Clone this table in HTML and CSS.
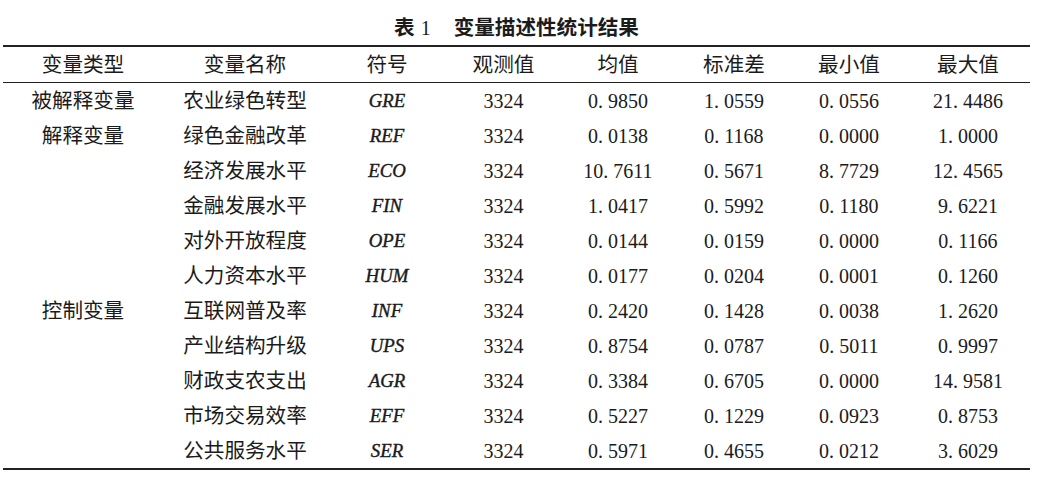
FILE: index.html
```html
<!DOCTYPE html>
<html lang="zh-CN">
<head>
<meta charset="utf-8">
<title>表1 变量描述性统计结果</title>
<link rel="stylesheet" href="styles.css">
</head>
<body>
<div class="caption"><span class="cj">表</span><span class="tno">1</span><span class="cj">变量描述性统计结果</span></div>
<table class="stats">
  <colgroup>
    <col class="c1"><col class="c2"><col class="c3"><col class="c4">
    <col class="c5"><col class="c6"><col class="c7"><col class="c8">
  </colgroup>
  <thead>
    <tr><th>变量类型</th><th>变量名称</th><th>符号</th><th>观测值</th><th>均值</th><th>标准差</th><th>最小值</th><th>最大值</th></tr>
  </thead>
  <tbody>
    <tr><td class="zh">被解释变量</td><td class="zh">农业绿色转型</td><td class="sym">GRE</td><td>3324</td><td>0<span class="pt">.</span>9850</td><td>1<span class="pt">.</span>0559</td><td>0<span class="pt">.</span>0556</td><td>21<span class="pt">.</span>4486</td></tr>
    <tr><td class="zh">解释变量</td><td class="zh">绿色金融改革</td><td class="sym">REF</td><td>3324</td><td>0<span class="pt">.</span>0138</td><td>0<span class="pt">.</span>1168</td><td>0<span class="pt">.</span>0000</td><td>1<span class="pt">.</span>0000</td></tr>
    <tr><td class="zh" rowspan="9">控制变量</td><td class="zh">经济发展水平</td><td class="sym">ECO</td><td>3324</td><td>10<span class="pt">.</span>7611</td><td>0<span class="pt">.</span>5671</td><td>8<span class="pt">.</span>7729</td><td>12<span class="pt">.</span>4565</td></tr>
    <tr><td class="zh">金融发展水平</td><td class="sym">FIN</td><td>3324</td><td>1<span class="pt">.</span>0417</td><td>0<span class="pt">.</span>5992</td><td>0<span class="pt">.</span>1180</td><td>9<span class="pt">.</span>6221</td></tr>
    <tr><td class="zh">对外开放程度</td><td class="sym">OPE</td><td>3324</td><td>0<span class="pt">.</span>0144</td><td>0<span class="pt">.</span>0159</td><td>0<span class="pt">.</span>0000</td><td>0<span class="pt">.</span>1166</td></tr>
    <tr><td class="zh">人力资本水平</td><td class="sym">HUM</td><td>3324</td><td>0<span class="pt">.</span>0177</td><td>0<span class="pt">.</span>0204</td><td>0<span class="pt">.</span>0001</td><td>0<span class="pt">.</span>1260</td></tr>
    <tr><td class="zh">互联网普及率</td><td class="sym">INF</td><td>3324</td><td>0<span class="pt">.</span>2420</td><td>0<span class="pt">.</span>1428</td><td>0<span class="pt">.</span>0038</td><td>1<span class="pt">.</span>2620</td></tr>
    <tr><td class="zh">产业结构升级</td><td class="sym">UPS</td><td>3324</td><td>0<span class="pt">.</span>8754</td><td>0<span class="pt">.</span>0787</td><td>0<span class="pt">.</span>5011</td><td>0<span class="pt">.</span>9997</td></tr>
    <tr><td class="zh">财政支农支出</td><td class="sym">AGR</td><td>3324</td><td>0<span class="pt">.</span>3384</td><td>0<span class="pt">.</span>6705</td><td>0<span class="pt">.</span>0000</td><td>14<span class="pt">.</span>9581</td></tr>
    <tr><td class="zh">市场交易效率</td><td class="sym">EFF</td><td>3324</td><td>0<span class="pt">.</span>5227</td><td>0<span class="pt">.</span>1229</td><td>0<span class="pt">.</span>0923</td><td>0<span class="pt">.</span>8753</td></tr>
    <tr><td class="zh">公共服务水平</td><td class="sym">SER</td><td>3324</td><td>0<span class="pt">.</span>5971</td><td>0<span class="pt">.</span>4655</td><td>0<span class="pt">.</span>0212</td><td>3<span class="pt">.</span>6029</td></tr>
  </tbody>
</table>
</body>
</html>
```
FILE: styles.css
```css
html, body {
  margin: 0;
  padding: 0;
  background: #ffffff;
}

body {
  color: #1b1b1b;
  font-family: "Liberation Serif", "Noto Sans CJK SC", serif;
  font-size: 20px;
}

.caption {
  width: 1027px;
  margin-left: 3px;
  padding-top: 14px;
  height: 31px;
  line-height: 24px;
  text-align: center;
  font-size: 20px;
}

.caption .cj {
  font-family: "Noto Sans CJK SC", sans-serif;
  font-weight: 700;
  font-size: 20.6px;
}

.caption .tno {
  font-family: "Liberation Serif", serif;
  font-weight: 400;
  margin-left: 6px;
  margin-right: 23px;
}

.stats {
  margin-left: 3px;
  width: 1027px;
  table-layout: fixed;
  border-collapse: collapse;
  border-top: 2px solid #222222;
  border-bottom: 2px solid #222222;
}

.stats .c1 { width: 160px; }
.stats .c2 { width: 164px; }
.stats .c3 { width: 120px; }
.stats .c4 { width: 113px; }
.stats .c5 { width: 116px; }
.stats .c6 { width: 116px; }
.stats .c7 { width: 114px; }
.stats .c8 { width: 124px; }

.stats th,
.stats td {
  height: 35px;
  padding: 0;
  text-align: center;
  vertical-align: middle;
  font-weight: 400;
  line-height: 24px;
  white-space: nowrap;
}

.stats th,
.stats .zh {
  font-size: 20.6px;
}

.stats thead th {
  border-bottom: 1px solid #222222;
}

.stats .sym {
  font-style: italic;
  font-weight: 400;
  font-size: 18.8px;
  -webkit-text-stroke: 0.4px #1b1b1b;
}

.stats .pt {
  margin-right: 5px;
}
```
